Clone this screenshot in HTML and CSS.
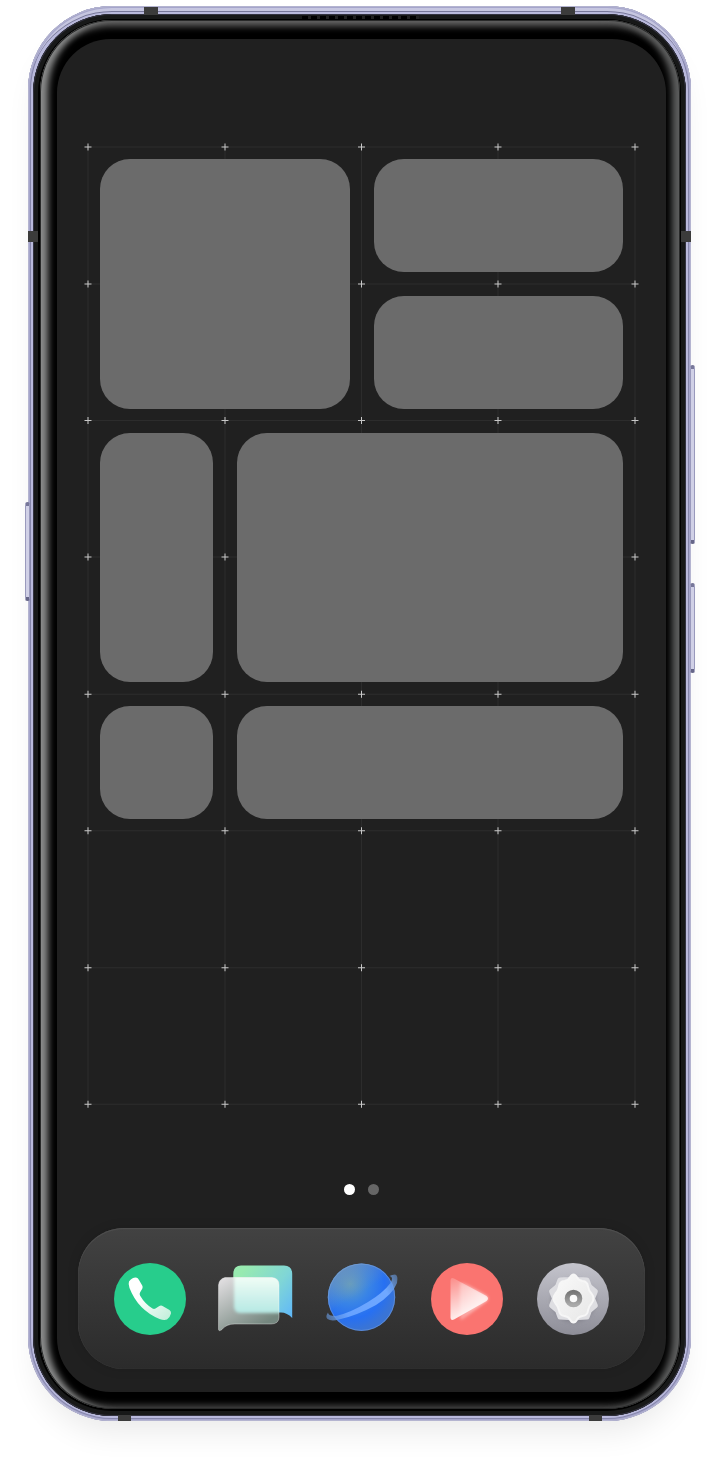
FILE: index.html
```html
<!DOCTYPE html>
<html lang="en">
<head>
<meta charset="utf-8">
<meta name="viewport" content="width=device-width, initial-scale=1">
<title>Home screen</title>
<link rel="stylesheet" href="styles.css">
</head>
<body>
<main class="phone">
  <span class="key key-left"></span>
  <span class="key key-volume"></span>
  <span class="key key-power"></span>
  <div class="bezel">
    <div class="glass">
      <div class="screen">
        <section class="widgets" aria-label="Widgets">
          <svg class="guides" viewBox="0 0 547 957" preserveAspectRatio="none" aria-hidden="true">
            <defs>
              <g id="row" class="cross"><path id="c" d="M-3.5 0h7M0-3.5v7"/><use href="#c" x="137"/><use href="#c" x="273.5"/><use href="#c" x="410"/><use href="#c" x="547"/></g>
            </defs>
            <path class="line" d="M0 0H547M0 137H547M0 273.500H547M0 410H547M0 547H547M0 683.500H547M0 820.500H547M0 957H547M0 0V957M137 0V957M273.500 0V957M410 0V957M547 0V957"/>
            <use href="#row"/><use href="#row" y="137"/><use href="#row" y="273.500"/><use href="#row" y="410"/><use href="#row" y="547"/><use href="#row" y="683.500"/><use href="#row" y="820.500"/><use href="#row" y="957"/>
          </svg>
          <div class="widget square"></div>
          <div class="widget wide"></div>
          <div class="widget wide"></div>
          <div class="widget tall"></div>
          <div class="widget large"></div>
          <div class="widget"></div>
          <div class="widget strip"></div>
        </section>
        <div class="pages"><span class="dot current"></span><span class="dot"></span></div>
        <nav class="dock" aria-label="Dock">
          <button class="app" type="button" aria-label="Phone">
            <svg viewBox="0 0 72 72">
              <defs><linearGradient id="call" x1="22" y1="22" x2="60" y2="58" gradientUnits="userSpaceOnUse"><stop offset=".2" stop-color="#fff"/><stop offset="1" stop-color="#b9ecd5"/></linearGradient></defs>
              <circle cx="36" cy="36" r="36" fill="#27cd8c"/>
              <path fill="url(#call)" d="M15 18.500Q18 14.500 22 14.600Q24 15 25 17L28.500 23Q29 25 27.800 26.500L26 29.500Q25.300 31 26 32.500Q31 41 38.500 45.500Q40 46.300 41.500 45.500L45 43.200Q47 42 49 43.200L55.500 47Q57.500 48.500 57 50.500Q56 54.500 53 56.500Q50 57.500 45.500 56Q24 47 15.500 25Q14 21 15 18.500Z"/>
            </svg>
          </button>
          <button class="app" type="button" aria-label="Messages">
            <svg viewBox="0 0 72 72">
              <defs>
                <linearGradient id="back" x1="15" y1="6" x2="74" y2="50" gradientUnits="userSpaceOnUse"><stop offset=".1" stop-color="#98eab0"/><stop offset=".6" stop-color="#80d6d6"/><stop offset="1" stop-color="#60b8f8"/></linearGradient>
                <linearGradient id="front" x1="5" y1="16" x2="35" y2="66" gradientUnits="userSpaceOnUse"><stop stop-color="#dedcde"/><stop offset="1" stop-color="#75877f"/></linearGradient>
                <linearGradient id="lit" x1="0" y1="16" x2="0" y2="50" gradientUnits="userSpaceOnUse"><stop stop-color="#edfcf5"/><stop offset="1" stop-color="#b5e8e3"/></linearGradient>
                <clipPath id="bubble"><path id="bub" d="M5 14.500H52Q59 15 59 22V54Q59 61 51 61H15Q6 61 2 66.500Q-1.500 69 -1.500 66V22Q-1 16 5 14.500Z"/></clipPath>
                <filter id="soft"><feGaussianBlur stdDeviation="1.500"/></filter>
              </defs>
              <path fill="url(#back)" d="M21 2.500H64Q72.200 2.500 72.200 11V55Q67 49.500 61 49.500H21Q13.300 49.500 13.300 42V11Q13.300 2.500 21 2.500Z"/>
              <use href="#bub" fill="url(#front)"/>
              <g clip-path="url(#bubble)"><rect x="14" y="4" width="60" height="46" rx="6" fill="url(#lit)" filter="url(#soft)"/></g>
              <use href="#bub" fill="none" stroke="#fff" stroke-opacity=".35"/>
            </svg>
          </button>
          <button class="app" type="button" aria-label="Browser">
            <svg viewBox="0 0 72 72">
              <defs>
                <radialGradient id="globe" cx="24" cy="21" r="46" gradientUnits="userSpaceOnUse"><stop stop-color="#639fc0"/><stop offset=".42" stop-color="#3984e6"/><stop offset=".75" stop-color="#2770f2"/><stop offset="1" stop-color="#3974d6"/></radialGradient>
                <linearGradient id="haze" x1="14" y1="2" x2="32" y2="32" gradientUnits="userSpaceOnUse"><stop stop-color="#7896b4" stop-opacity=".75"/><stop offset="1" stop-color="#7896b4" stop-opacity="0"/></linearGradient>
                <linearGradient id="orbit" x1="0" y1="54" x2="71" y2="14" gradientUnits="userSpaceOnUse"><stop stop-color="#6796d7" stop-opacity=".6"/><stop offset=".25" stop-color="#67a2ff"/><stop offset=".8" stop-color="#70a8ff"/><stop offset="1" stop-color="#6796d7" stop-opacity=".6"/></linearGradient>
              </defs>
              <circle cx="35.500" cy="34.200" r="33.700" fill="url(#globe)"/>
              <circle cx="35.500" cy="34.200" r="33.700" fill="url(#haze)"/>
              <circle cx="35.500" cy="34.200" r="33.200" fill="none" stroke="#87a9d8" stroke-opacity=".45"/>
              <path fill="url(#orbit)" d="M2 49.500Q-1 54 1.500 56Q5 58.500 13 56.500Q31 52.500 50 42Q67 31 71 20Q72.500 12 69 11.500Q66 11.500 63.500 13Q68 14 64.500 20Q57 30 42 39Q24 50 10 53Q2 53 2 49.500Z"/>
            </svg>
          </button>
          <button class="app" type="button" aria-label="Video">
            <svg viewBox="0 0 72 72">
              <defs>
                <linearGradient id="play" x1="20" y1="16" x2="34" y2="55" gradientUnits="userSpaceOnUse"><stop stop-color="#fff" stop-opacity=".2"/><stop offset=".9" stop-color="#fff" stop-opacity=".85"/></linearGradient>
                <linearGradient id="ghost" x1="29" y1="0" x2="57" y2="0" gradientUnits="userSpaceOnUse"><stop stop-color="#fff" stop-opacity=".3"/><stop offset="1" stop-color="#fff" stop-opacity=".6"/></linearGradient>
              </defs>
              <circle cx="36" cy="36" r="36" fill="#fa7470"/>
              <path fill="url(#ghost)" filter="url(#soft)" d="M29 20Q32 18 56 33Q58 35.500 56 38L32 56Q29 58 29 54Z"/>
              <path fill="url(#play)" d="M19.500 18Q19.500 14 23 15.500L55.500 33Q58.500 35.500 55.500 38L23 56.500Q19.500 58 19.500 54Z"/>
            </svg>
          </button>
          <button class="app" type="button" aria-label="Settings">
            <svg viewBox="0 0 72 72">
              <defs>
                <linearGradient id="metal" x1="0" y1="0" x2="0" y2="1"><stop stop-color="#c4c4cc"/><stop offset="1" stop-color="#8e8e98"/></linearGradient>
                <linearGradient id="face" x1="0" y1="0" x2="1" y2="1"><stop stop-color="#fafafa"/><stop offset="1" stop-color="#e6e6e6"/></linearGradient>
                <linearGradient id="hub" x1="0" y1="0" x2="0" y2="1"><stop stop-color="#777"/><stop offset="1" stop-color="#aaa"/></linearGradient>
                <filter id="shade" x="-20%" y="-20%" width="140%" height="140%"><feGaussianBlur stdDeviation="2"/></filter>
              </defs>
              <circle cx="36" cy="36" r="36" fill="url(#metal)"/>
              <g transform="translate(36.500 35.500)" stroke-linejoin="round">
                <circle cy="2" r="22" fill="#777780" fill-opacity=".6" filter="url(#shade)"/>
                <path fill="#dedee2" stroke="#dedee2" stroke-width="5" d="M0-20L5-19L13.500-18.600L16-12L21.900-7.100L19 0L21.900 7.100L16 12L13.500 18.600L5 19L0 20L-5 19L-13.500 18.600L-16 12L-21.900 7.100L-19 0L-21.900-7.100L-16-12L-13.500-18.600L-5-19Z"/>
                <path fill="url(#face)" stroke="#f6f6f6" stroke-width="2" d="M0-24Q2-24 3.500-21Q5-18 9-17.500Q14-17 14.500-12Q15-8 18-5Q22 0 18 5Q15 8 14.500 12Q14 17 9 17.500Q5 18 3.500 21Q2 24 0 24Q-2 24-3.500 21Q-5 18-9 17.500Q-14 17-14.500 12Q-15 8-18 5Q-22 0-18-5Q-15-8-14.500-12Q-14-17-9-17.500Q-5-18-3.500-21Q-2-24 0-24Z"/>
                <circle r="6.300" fill="#fafafa" stroke="url(#hub)" stroke-width="5"/>
              </g>
            </svg>
          </button>
        </nav>
      </div>
    </div>
  </div>
  <span class="speaker"></span>
  <span class="band band-top-left"></span>
  <span class="band band-top-right"></span>
  <span class="band band-bottom-left"></span>
  <span class="band band-bottom-right"></span>
  <span class="band band-side-left"></span>
  <span class="band band-side-right"></span>
</main>
</body>
</html>
```

FILE: styles.css
```css
* { box-sizing: border-box; }

body {
  margin: 0;
  padding: 6px 31px 48px 28px;
  background: #fff;
  font-family: "Liberation Sans", sans-serif;
}

.phone {
  position: relative;
  padding: 8px 5px 5px;
  border-radius: 84px;
  background: #b9b9dc;
  box-shadow:
    inset 0 0 0 1px #b4b4d0,
    inset 0 0 0 2px #a5a5cb,
    inset 0 5px 0 #c6c6e0,
    inset 0 0 0 3px #8585ab,
    inset 0 6px 0 #777799,
    0 20px 32px -10px rgba(0, 0, 0, .09);
}

.bezel {
  position: relative;
  padding: 6px 6px 7px 7px;
  border-radius: 79px;
  background: #000;
  box-shadow: inset 0 0 0 1px #333340, inset 0 0 0 5px #171818;
}

.glass {
  padding: 19px 14px 17px 17px;
  border-radius: 72px;
  background: #000;
  box-shadow:
    inset 0 0 0 1px #292a2a,
    inset 13px 0 7px -5px #8b8c8c,
    inset -13px 0 7px -5px #5d5e5e,
    inset 0 11px 7px -5px #666,
    inset 0 -9px 6px -5px #444;
}

.screen {
  padding: 108px 31px 23px;
  border-radius: 54px;
  background: #202020;
}

.widgets {
  position: relative;
  display: grid;
  grid-template-columns: repeat(4, 1fr);
  grid-template-rows: repeat(7, 1fr);
  gap: 24px;
  aspect-ratio: 4 / 7;
  padding: 12px;
}

.guides {
  position: absolute;
  inset: 0;
  width: 100%;
  height: 100%;
  overflow: visible;
}

.line { fill: none; stroke: #2c2c2c; stroke-width: 1; }
.cross { fill: none; stroke: #c8c8c8; stroke-width: 1; }

.widget {
  position: relative;
  border-radius: 30px;
  background: #6b6b6b;
}

.square { grid-column: span 2; grid-row: span 2; }
.wide { grid-column: 3 / span 2; }
.tall { grid-row: span 2; }
.large { grid-column: span 3; grid-row: span 2; }
.strip { grid-column: span 3; }

.pages {
  display: flex;
  justify-content: center;
  gap: 13px;
  padding: 80px 0 33px;
}

.dot {
  width: 11px;
  height: 11px;
  border-radius: 50%;
  background: #666;
}

.current { background: #fff; }

.dock {
  display: flex;
  align-items: center;
  justify-content: space-between;
  height: 141px;
  margin: 0 -10px;
  padding: 0 36px;
  border-radius: 46px;
  background: linear-gradient(#424242, #2b2b2b);
  box-shadow: inset 0 1px 1px #505050, inset 0 0 1px #484848, 0 0 12px rgba(0, 0, 0, .12);
}

.app {
  width: 72px;
  height: 72px;
  padding: 0;
  border: 0;
  background: none;
}

.app svg { display: block; overflow: visible; }

.key {
  position: absolute;
  width: 5px;
  border: 1px solid #9999bc;
  border-top: 4px solid #777799;
  border-bottom: 4px solid #666688;
  border-radius: 3px;
  background: #d0d0e6;
}

.key-left { top: 496px; left: -3px; height: 99px; }
.key-volume { top: 359px; right: -4px; height: 179px; }
.key-power { top: 577px; right: -4px; height: 90px; }

.band { position: absolute; background: #3b3b3b; }
.band-top-left, .band-top-right { top: 1px; width: 14px; height: 8px; }
.band-bottom-left, .band-bottom-right { bottom: 0; width: 13px; height: 6px; }
.band-top-left { left: 116px; }
.band-top-right { right: 116px; }
.band-bottom-left { left: 90px; }
.band-bottom-right { right: 89px; }
.band-side-left, .band-side-right { top: 225px; width: 10px; height: 11px; }
.band-side-left { left: 0; }
.band-side-right { right: 0; }

.speaker {
  position: absolute;
  top: 10px;
  left: calc(50% - 58px);
  width: 117px;
  height: 3px;
  background: repeating-linear-gradient(90deg, #000 0 6px, #202020 6px 9px);
}
```
